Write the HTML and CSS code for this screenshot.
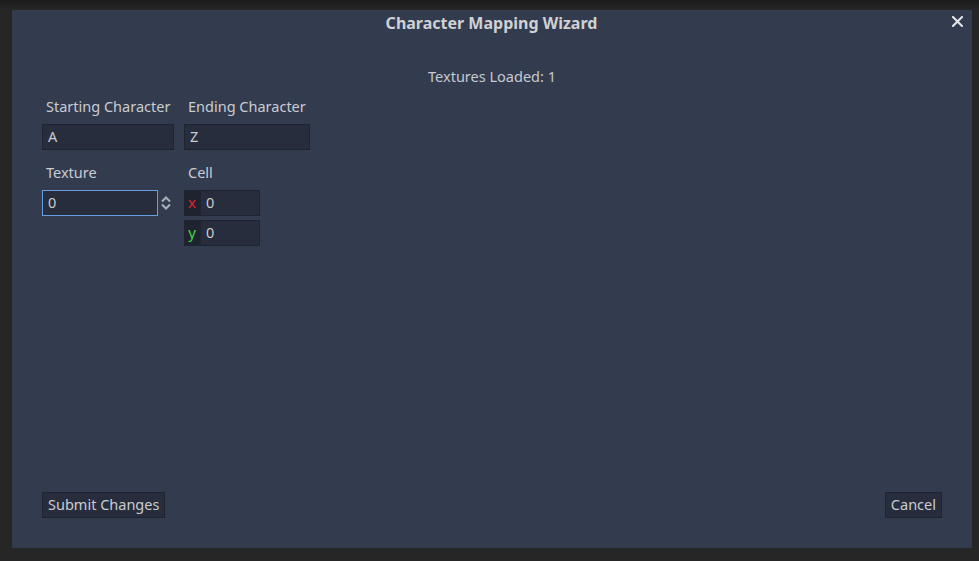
FILE: index.html
```html
<!DOCTYPE html>
<html>
<head>
<meta charset="utf-8">
<link rel="stylesheet" href="styles.css">
</head>
<body>
<div class="screen">
  <div class="dialog">
    <div class="titlebar">
      <div class="title-spacer"></div>
      <div class="title">Character Mapping Wizard</div>
      <div class="title-actions">
        <button class="close" aria-label="Close">
          <svg width="11" height="11" viewBox="0 0 11 11"><path d="M1 1 L10 10 M10 1 L1 10" stroke="#e6e8ec" stroke-width="2" stroke-linecap="square"/></svg>
        </button>
      </div>
    </div>
    <div class="status">Textures Loaded: 1</div>
    <div class="form">
      <div class="field col1">
        <div class="label">Starting Character</div>
        <div class="input w132">A</div>
      </div>
      <div class="field col2">
        <div class="label">Ending Character</div>
        <div class="input w126">Z</div>
      </div>
      <div class="field col1 row2">
        <div class="label">Texture</div>
        <div class="spin">
          <div class="input w116 focus">0</div>
          <svg class="arrows" width="12" height="14" viewBox="0 0 12 14"><path d="M2 5.5 L6 1.5 L10 5.5 M2 8.5 L6 12.5 L10 8.5" fill="none" stroke="#aab0ba" stroke-width="2"/></svg>
        </div>
      </div>
      <div class="field col2 row2">
        <div class="label">Cell</div>
        <div class="vec">
          <div class="vrow"><span class="axis ax">x</span><div class="input w60">0</div></div>
          <div class="vrow"><span class="axis ay">y</span><div class="input w60">0</div></div>
        </div>
      </div>
    </div>
    <div class="footer">
      <button class="btn">Submit Changes</button>
      <button class="btn">Cancel</button>
    </div>
  </div>
</div>
</body>
</html>
```

FILE: styles.css
```css
html, body {
  margin: 0;
  padding: 0;
}
body {
  background: #262626;
  font-family: "Noto Sans", "Open Sans", sans-serif;
  font-size: 14.5px;
  color: #c9ccd2;
}
.screen {
  width: 979px;
  height: 561px;
  box-sizing: border-box;
  padding: 10px 7px 13px 12px;
  background: linear-gradient(#1d1d1d 0, #222 6px, #262626 9px);
}
.dialog {
  width: 960px;
  height: 538px;
  background: #333b4f;
  box-sizing: border-box;
  padding: 0 30px 30px 30px;
  display: flex;
  flex-direction: column;
}
.titlebar {
  height: 26px;
  display: grid;
  grid-template-columns: 1fr auto 1fr;
  margin: 0 -30px;
  padding-right: 9px;
}
.title {
  font-weight: bold;
  font-size: 16px;
  line-height: 26px;
  color: #cfd1d5;
  padding-left: 8px;
}
.title-actions {
  display: flex;
  justify-content: flex-end;
  align-items: flex-start;
}
.close {
  background: none;
  border: 0;
  padding: 0;
  margin-top: 6px;
  width: 11px;
  height: 11px;
  display: block;
}
.close svg { display: block; }
.status {
  margin-top: 30px;
  line-height: 20px;
  height: 20px;
  text-align: center;
  color: #c6c9cf;
}
.form {
  margin-top: 11px;
  display: grid;
  grid-template-columns: 132px 126px;
  column-gap: 10px;
  row-gap: 13px;
  align-items: start;
}
.label {
  height: 18px;
  line-height: 18px;
  padding-left: 4px;
  margin-bottom: 9px;
  color: #c9ccd2;
  white-space: nowrap;
}
.input {
  box-sizing: border-box;
  height: 26px;
  line-height: 23px;
  background: #272d3c;
  border: 1px solid #1f2431;
  padding-left: 5px;
  color: #c9ccd2;
}
.w132 { width: 132px; }
.w126 { width: 126px; }
.w116 { width: 116px; }
.w60 { width: 60px; }
.focus {
  border-color: #6a9ce0;
}
.spin {
  display: flex;
  align-items: center;
}
.arrows {
  margin-left: 2px;
  display: block;
}
.vec {
  display: flex;
  flex-direction: column;
  gap: 4px;
}
.vrow {
  display: flex;
}
.axis {
  width: 16px;
  height: 26px;
  line-height: 25px;
  background: #1f2330;
  text-align: center;
  font-size: 15px;
}
.ax { color: #e0252a; }
.ay { color: #3fd63f; }
.footer {
  margin-top: auto;
  display: flex;
  justify-content: space-between;
}
.btn {
  font-family: "Noto Sans", "Open Sans", sans-serif;
  font-size: 14.5px;
  color: #c9ccd2;
  background: #272d3c;
  border: 1px solid #1f2431;
  box-sizing: border-box;
  height: 26px;
  padding: 0 5px 2px 5px;
  line-height: 22px;
  margin: 0;
}
```
